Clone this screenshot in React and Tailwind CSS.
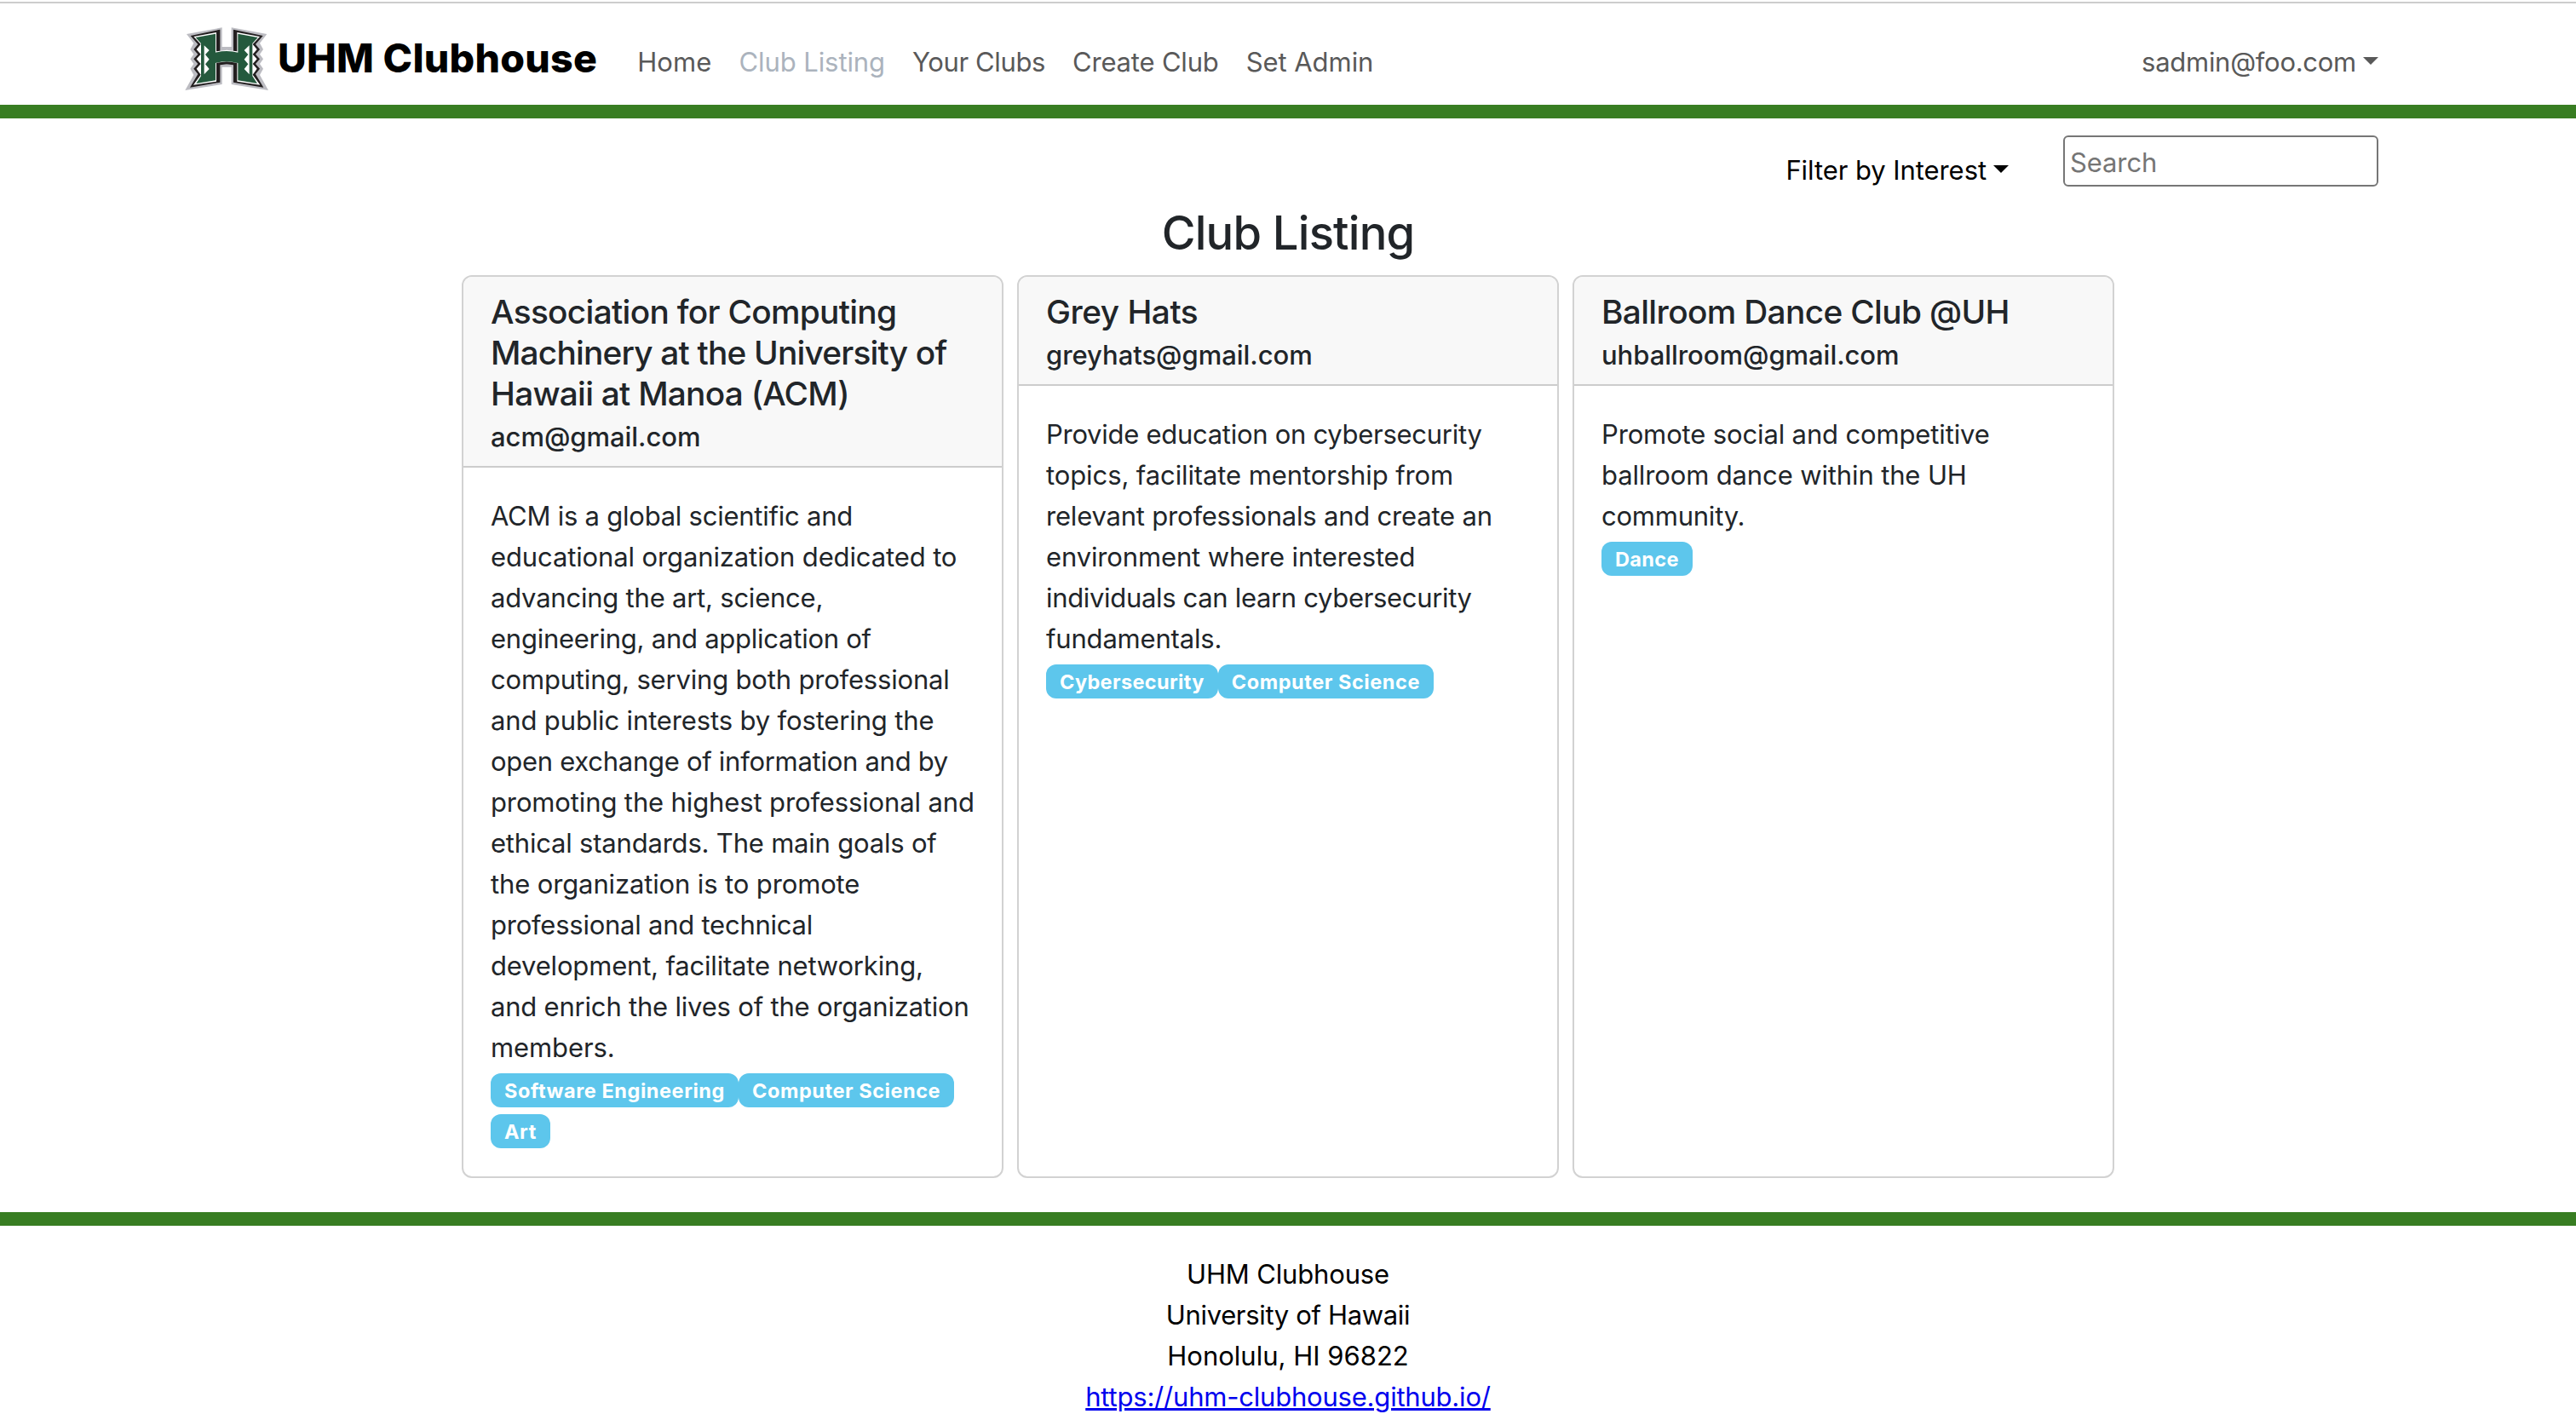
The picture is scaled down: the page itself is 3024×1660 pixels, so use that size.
const halfH = {
  gray: "M182 97 L57 120 L82 152 L70 174 L82 191 L70 208 L82 225 L70 242 L82 264 L52 318 L182 297 L182 236 L199 236 L199 165 L182 165 Z",
  black: "M175 104 L71 126 L97 156 L82 174 L97 191 L82 208 L97 225 L82 242 L97 261 L69 308 L175 290 L175 229 L199 226 L199 178 L175 182 Z",
  white: "M162 114 L82 129 L107 156 L92 174 L107 191 L92 208 L107 225 L92 242 L107 263 L81 299 L162 287 L162 221 L199 217 L199 176 L162 181 Z",
  green: "M159 119 L89 132 L108 153 L108 268 L91 294 L159 283 L159 222 Q178 217 199 217 L199 180 Q178 180 159 185 Z",
  teeth: "M119 160 L137 177 L123 192 L137 209 L123 226 L137 243 L119 262 Z",
};
const mirror = "translate(397 0) scale(-1 1)";

function Logo() {
  return (
    <svg viewBox="48 93 300 231" className="mt-[27px] h-[77px] w-[100px] shrink-0">
      {[
        ["gray", "#bcbcc2"],
        ["black", "#231f20"],
        ["white", "#ffffff"],
        ["green", "#24593d"],
        ["teeth", "#ffffff"],
      ].map(([k, c]) => (
        <g key={k} fill={c}>
          <path d={halfH[k]} />
          <path d={halfH[k]} transform={mirror} />
        </g>
      ))}
    </svg>
  );
}

function Caret() {
  return <span className="ml-2 mt-[17.5px] h-0 w-0 border-x-[9.6px] border-t-[9.6px] border-x-transparent border-t-current" />;
}

const links = [
  ["Home", "tracking-[0.1px] text-[#595959]"],
  ["Club Listing", "tracking-[-0.08px] text-[#abb3bd]"],
  ["Your Clubs", "tracking-[-0.39px] text-[#595959]"],
  ["Create Club", "tracking-[-0.18px] text-[#595959]"],
  ["Set Admin", "tracking-[-0.05px] text-[#595959]"],
];

const clubs = [
  {
    title: [
      ["Association for Computing", "tracking-[-0.68px]"],
      ["Machinery at the University of", "tracking-[-0.8px]"],
      ["Hawaii at Manoa (ACM)", "tracking-[-0.74px]"],
    ],
    email: "acm@gmail.com",
    body: [
      ["ACM is a global scientific and", "tracking-[-0.24px]"],
      ["educational organization dedicated to", "tracking-[-0.12px]"],
      ["advancing the art, science,", "tracking-[-0.22px]"],
      ["engineering, and application of", "tracking-[-0.25px]"],
      ["computing, serving both professional", "tracking-[-0.18px]"],
      ["and public interests by fostering the", "tracking-[-0.14px]"],
      ["open exchange of information and by", "tracking-[-0.28px]"],
      ["promoting the highest professional and", "tracking-[-0.13px]"],
      ["ethical standards. The main goals of", "tracking-[-0.2px]"],
      ["the organization is to promote", "tracking-[-0.13px]"],
      ["professional and technical", "tracking-[-0.24px]"],
      ["development, facilitate networking,", "tracking-[-0.18px]"],
      ["and enrich the lives of the organization", "tracking-[-0.2px]"],
      ["members.", "tracking-[-0.1px]"],
    ],
    tags: ["Software Engineering", "Computer Science", "Art"],
  },
  {
    title: [["Grey Hats", "tracking-[-0.5px]"]],
    email: "greyhats@gmail.com",
    body: [
      ["Provide education on cybersecurity", "tracking-[-0.28px]"],
      ["topics, facilitate mentorship from", "tracking-[-0.1px]"],
      ["relevant professionals and create an", "tracking-[-0.2px]"],
      ["environment where interested", "tracking-[-0.14px]"],
      ["individuals can learn cybersecurity", "tracking-[-0.33px]"],
      ["fundamentals.", "tracking-[-0.18px]"],
    ],
    tags: ["Cybersecurity", "Computer Science"],
  },
  {
    title: [["Ballroom Dance Club @UH", "tracking-[-0.64px]"]],
    email: "uhballroom@gmail.com",
    body: [
      ["Promote social and competitive", "tracking-[-0.14px]"],
      ["ballroom dance within the UH", "tracking-[-0.13px]"],
      ["community.", "tracking-[-0.23px]"],
    ],
    tags: ["Dance"],
  },
];

function ClubCard({ club }) {
  return (
    <article className="flex flex-col overflow-hidden rounded-xl border-2 border-[#d2d2d2] bg-white">
      <header className="border-b-2 border-[#cccccc] bg-[#f8f8f8] px-8 pt-[17px] pb-[15px] font-medium">
        <h2 className="text-[38.8px] leading-[48px]">
          {club.title.map(([t, c]) => (
            <span key={t} className={"block whitespace-nowrap " + c}>{t}</span>
          ))}
        </h2>
        <h3 className="mt-2 h-[38px] text-[31px] leading-[38px] tracking-[-0.04px]">{club.email}</h3>
      </header>
      <div className="flex-1 px-8 pt-[33px] pb-8">
        <p className="-mb-px">
          {club.body.map(([t, c]) => (
            <span key={t} className={"block whitespace-nowrap " + c}>{t}</span>
          ))}
        </p>
        <div className="flex flex-wrap">
          {club.tags.map((t) => (
            <span
              key={t}
              className={
                "mt-[7px] mb-px h-10 rounded-xl bg-[#5dc6ec] px-4 text-[23.5px] leading-[42px] font-bold text-white " +
                (t === "Cybersecurity" || t === "Dance" ? "tracking-[0.36px]" : "tracking-[0.56px]")
              }
            >
              {t}
            </span>
          ))}
        </div>
      </div>
    </article>
  );
}

export default function App() {
  return (
    <div className="h-screen overflow-hidden bg-white pt-[2px] font-['Inter','Liberation_Sans',sans-serif] text-[31px] leading-[48px] text-[#212529]">
      <nav className="flex h-[137px] items-start border-t-2 border-b-16 border-t-[#cdcdcd] border-b-[#387d22] pr-[232px] pl-[216px]">
        <Logo />
        <span className="mt-7 ml-[10px] text-[46.5px] leading-[72px] font-extrabold tracking-[0.24px] text-black">
          UHM Clubhouse
        </span>
        <div className="mt-[45px] ml-[47px] flex gap-8">
          {links.map(([t, c]) => (
            <a key={t} className={c}>{t}</a>
          ))}
        </div>
        <div className="mt-[45px] ml-auto flex items-start tracking-[-0.28px] text-[#595959]">
          sadmin@foo.com
          <Caret />
        </div>
      </nav>

      <div className="flex h-[100px] items-start justify-end gap-16 pr-[232px]">
        <button className="mt-[37px] flex items-start tracking-[-0.07px] text-black">
          Filter by Interest
          <Caret />
        </button>
        <input
          placeholder="Search"
          className="mt-5 h-[60px] w-[370px] rounded-md border-2 border-[#767676] px-[6px] pt-[2px] tracking-[-0.1px] placeholder:text-[#757575]"
        />
      </div>

      <h1 className="mb-4 text-center text-[54.3px] leading-[68px] font-medium tracking-[-0.8px]">Club Listing</h1>

      <main className="mx-auto grid w-[1940px] grid-cols-3 gap-4">
        {clubs.map((c) => (
          <ClubCard key={c.email} club={c} />
        ))}
      </main>

      <footer className="mt-10 border-t-16 border-[#387d22] pt-[33px] text-center text-black">
        <div className="tracking-[-0.16px]">UHM Clubhouse</div>
        <div className="tracking-[-0.34px]">University of Hawaii</div>
        <div>Honolulu, HI 96822</div>
        <a className="tracking-[-0.21px] text-[#0000ee] underline">https://uhm-clubhouse.github.io/</a>
      </footer>
    </div>
  );
}
